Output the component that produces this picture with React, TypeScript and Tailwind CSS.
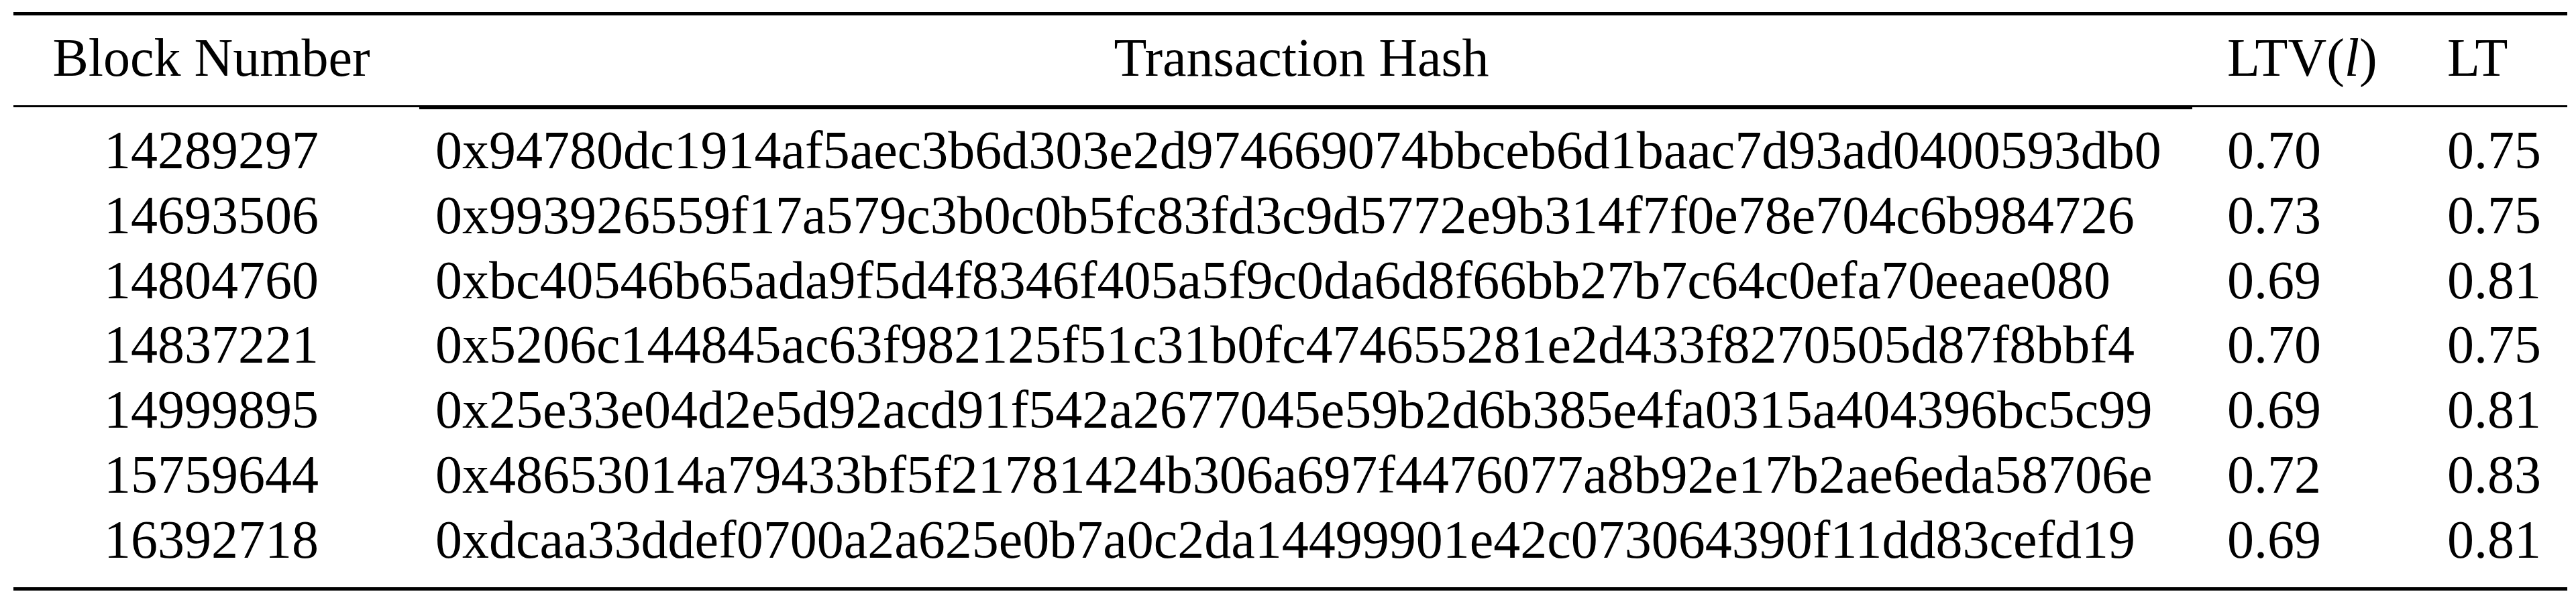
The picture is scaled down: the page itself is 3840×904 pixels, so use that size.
import React from "react";

// rows from the paper's table
interface Row {
  block: string;
  hash: string;
  ltv: string;
  lt: string;
}

const rows: Row[] = [
  { block: "14289297", hash: "0x94780dc1914af5aec3b6d303e2d974669074bbceb6d1baac7d93ad0400593db0", ltv: "0.70", lt: "0.75" },
  { block: "14693506", hash: "0x993926559f17a579c3b0c0b5fc83fd3c9d5772e9b314f7f0e78e704c6b984726", ltv: "0.73", lt: "0.75" },
  { block: "14804760", hash: "0xbc40546b65ada9f5d4f8346f405a5f9c0da6d8f66bb27b7c64c0efa70eeae080", ltv: "0.69", lt: "0.81" },
  { block: "14837221", hash: "0x5206c144845ac63f982125f51c31b0fc474655281e2d433f8270505d87f8bbf4", ltv: "0.70", lt: "0.75" },
  { block: "14999895", hash: "0x25e33e04d2e5d92acd91f542a2677045e59b2d6b385e4fa0315a404396bc5c99", ltv: "0.69", lt: "0.81" },
  { block: "15759644", hash: "0x48653014a79433bf5f21781424b306a697f4476077a8b92e17b2ae6eda58706e", ltv: "0.72", lt: "0.83" },
  { block: "16392718", hash: "0xdcaa33ddef0700a2a625e0b7a0c2da14499901e42c073064390f11dd83cefd19", ltv: "0.69", lt: "0.81" },
];

const App = () => {
  return (
    <div
      className="h-[904px] w-[3840px] bg-white text-black text-[80px] overflow-hidden"
      style={{ fontFamily: '"Liberation Serif", "Times New Roman", serif' }}
    >
      <div className="ml-[20px] w-[3807px] pt-[18px]">
        {/* top rule */}
        <div className="h-[5px] bg-black" />

        {/* header */}
        <div className="pt-[15px] pb-[22px]">
          <div className="grid grid-cols-[590px_2660px_330px_227px] h-[97px] leading-[97px] whitespace-nowrap">
            <div className="text-center">Block Number</div>
            <div className="text-center">Transaction Hash</div>
            <div className="pl-[50px]">
              LTV(<i>l</i>)
            </div>
            <div className="pl-[48px]">LT</div>
          </div>
        </div>

        {/* mid rule, slightly heavier under the hash column */}
        <div className="h-[3px] bg-black" />
        <div className="flex h-[3px]">
          <div className="w-[605px]" />
          <div className="w-[2643px] bg-black" />
        </div>

        {/* body */}
        <div className="pt-[13px] pb-[22px]">
          {rows.map((row) => (
            <div
              key={row.block}
              className="grid grid-cols-[590px_2660px_330px_227px] h-[96.8px] leading-[97px] whitespace-nowrap"
            >
              <div className="text-center">{row.block}</div>
              <div className="pl-[39px]">{row.hash}</div>
              <div className="pl-[50px]">{row.ltv}</div>
              <div className="pl-[48px]">{row.lt}</div>
            </div>
          ))}
        </div>

        {/* bottom rule */}
        <div className="h-[5px] bg-black" />
      </div>
    </div>
  );
};

export default App;
